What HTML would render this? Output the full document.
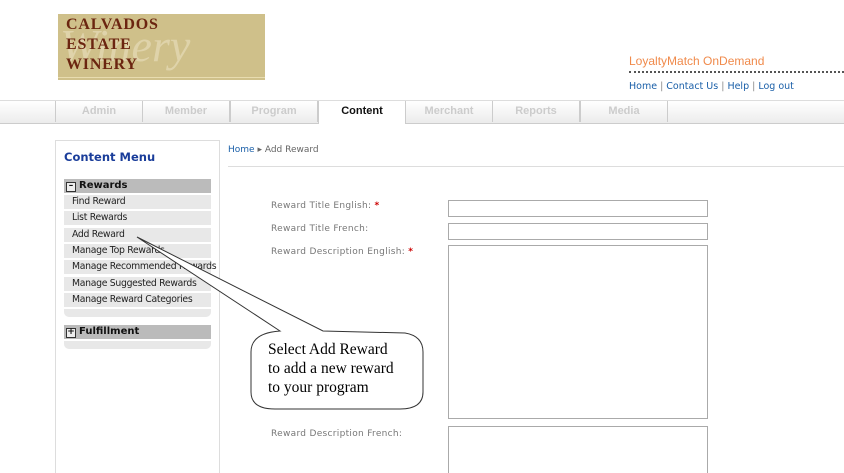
<!DOCTYPE html>
<html><head><style>
html,body{margin:0;width:844px;height:473px;overflow:hidden}
body{background:#fff;font-family:"DejaVu Sans",Verdana,sans-serif;position:relative}
.a{position:absolute}
.tab{position:absolute;top:101px;height:21px;width:86px;border-left:1px solid #ccc;border-right:1px solid #ccc;font:bold 11px "Liberation Sans",Arial,sans-serif;color:#ccc;text-align:center;line-height:21px;background:linear-gradient(#fff,#ececec)}
.mi{position:absolute;left:64px;width:147px;height:14px;background:#e8e8e8;font-size:9.3px;color:#222;line-height:14px;padding-left:8px;box-sizing:border-box;letter-spacing:-.3px;white-space:nowrap;overflow:visible}
.mh{position:absolute;left:64px;width:147px;height:14px;background:#bbb;font-weight:bold;font-size:10px;line-height:14px;padding-left:15px;box-sizing:border-box;color:#111}
.bx{position:absolute;left:2px;top:3px;width:8px;height:8px;border:1px solid #333;background:#eee;font-size:9px;line-height:7px;text-align:center}
.lb{position:absolute;left:271px;font-size:9px;color:#777;letter-spacing:.3px}
.lb b{color:#c00;font-weight:bold}
.in{position:absolute;left:448px;width:258px;border:1px solid #aaa;background:#fff}
</style></head><body>
<div class="a" style="left:58px;top:14px;width:207px;height:66px;background:#cfc08a;overflow:hidden">
<div class="a" style="left:2px;top:5px;font:italic 46px 'Liberation Serif',serif;color:#e6dcb8;opacity:.7">Winery</div>
</div>
<div class="a" style="left:58px;top:77px;width:207px;height:1px;background:#e8dcb0"></div>
<div class="a" style="left:66px;top:15px;font:bold 16px/20px 'Liberation Serif',serif;color:#6b2510;letter-spacing:.8px">CALVADOS<br>ESTATE<br>WINERY</div>
<div class="a" style="left:629px;top:54px;font:12px 'Liberation Sans',Arial,sans-serif;color:#f08a4b">LoyaltyMatch OnDemand</div>
<div class="a" style="left:629px;top:71px;width:215px;border-top:2px dotted #555"></div>
<div class="a" style="left:629px;top:81px;font-size:9.5px;color:#1a5fa8">Home <span style="color:#888">|</span> Contact Us <span style="color:#888">|</span> Help <span style="color:#888">|</span> Log out</div>
<div class="a" style="left:0;top:100px;width:844px;height:22px;background:linear-gradient(#fff,#ececec);border-top:1px solid #ddd;border-bottom:1px solid #ccc"></div>
<div class="tab" style="left:55px">Admin</div>
<div class="tab" style="left:142px">Member</div>
<div class="tab" style="left:230px">Program</div>
<div class="tab" style="left:318px;background:#fff;color:#111;height:23px">Content</div>
<div class="tab" style="left:405px">Merchant</div>
<div class="tab" style="left:492px">Reports</div>
<div class="tab" style="left:580px">Media</div>
<div class="a" style="left:55px;top:140px;width:163px;height:340px;border:1px solid #ddd;border-bottom:none"></div>
<div class="a" style="left:64px;top:150px;font-weight:bold;font-size:11.5px;color:#1a3d9a">Content Menu</div>
<div class="mh" style="top:179px"><div class="bx">–</div>Rewards</div>
<div class="mi" style="top:195px">Find Reward</div>
<div class="mi" style="top:211px">List Rewards</div>
<div class="mi" style="top:228px">Add Reward</div>
<div class="mi" style="top:244px">Manage Top Rewards</div>
<div class="mi" style="top:260px">Manage Recommended Rewards</div>
<div class="mi" style="top:277px">Manage Suggested Rewards</div>
<div class="mi" style="top:293px">Manage Reward Categories</div>
<div class="a" style="left:64px;top:309px;width:147px;height:8px;background:#e8e8e8;border-radius:0 0 5px 5px"></div>
<div class="mh" style="top:325px"><div class="bx">+</div>Fulfillment</div>
<div class="a" style="left:64px;top:341px;width:147px;height:8px;background:#e8e8e8;border-radius:0 0 5px 5px"></div>
<div class="a" style="left:228px;top:145px;font-size:9px;color:#666"><span style="color:#1a5fa8">Home</span> ▸ Add Reward</div>
<div class="a" style="left:228px;top:166px;width:616px;height:1px;background:#ddd"></div>
<div class="lb" style="top:201px">Reward Title English: <b>*</b></div>
<div class="lb" style="top:224px">Reward Title French:</div>
<div class="lb" style="top:247px">Reward Description English: <b>*</b></div>
<div class="lb" style="top:429px">Reward Description French:</div>
<div class="in" style="top:200px;height:15px"></div>
<div class="in" style="top:223px;height:15px"></div>
<div class="in" style="top:245px;height:172px"></div>
<div class="in" style="top:426px;height:46px;border-bottom:none"></div>
<svg class="a" style="left:0;top:0" width="844" height="473">
<path d="M280 331 L137 237 L323 331 L405 333 Q423 336 423 352 L423 392 Q423 409 400 409 L275 409 Q251 409 251 392 L251 352 Q251 333 280 331 Z" fill="#fff" stroke="#333" stroke-width="1"/>
<text font-family="Liberation Serif,serif" font-size="15.5" fill="#000"><tspan x="268" y="354">Select Add Reward</tspan><tspan x="268" y="373">to add a new reward</tspan><tspan x="268" y="392">to your program</tspan></text>
</svg>
</body></html>
